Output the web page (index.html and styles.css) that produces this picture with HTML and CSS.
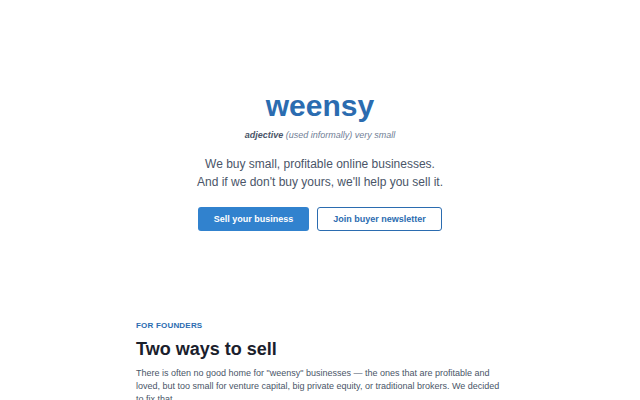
FILE: index.html
```html
<!DOCTYPE html>
<html>
<head>
<meta charset="utf-8">
<link rel="stylesheet" href="styles.css">
</head>
<body>
<main class="page">
  <section class="hero">
    <h1 class="logo">weensy</h1>
    <p class="definition"><b>adjective</b> (used informally) very small</p>
    <p class="lead">We buy small, profitable online businesses.<br>And if we don't buy yours, we'll help you sell it.</p>
    <div class="actions">
      <a class="btn btn-primary" href="#">Sell your business</a>
      <a class="btn btn-outline" href="#">Join buyer newsletter</a>
    </div>
  </section>
  <section class="founders">
    <p class="eyebrow">FOR FOUNDERS</p>
    <h2 class="heading">Two ways to sell</h2>
    <p class="body">There is often no good home for "weensy" businesses — the ones that are profitable and loved, but too small for venture capital, big private equity, or traditional brokers. We decided to fix that.</p>
  </section>
</main>
</body>
</html>
```
FILE: styles.css
```css
html, body {
  margin: 0;
  padding: 0;
  background: #ffffff;
}
body {
  font-family: "Liberation Sans", Arial, sans-serif;
  color: #2d3748;
}
.page {
  display: flex;
  flex-direction: column;
  align-items: center;
}
.hero {
  display: flex;
  flex-direction: column;
  align-items: center;
  padding-top: 88px;
}
.logo {
  margin: 0;
  font-size: 30px;
  line-height: 36px;
  font-weight: 700;
  color: #2b6cb0;
}
.definition {
  margin: 4px 0 0;
  font-size: 9px;
  line-height: 14px;
  font-style: italic;
  color: #718096;
}
.definition b {
  color: #4a5568;
}
.lead {
  margin: 13px 0 0;
  font-size: 12px;
  line-height: 18px;
  text-align: center;
  color: #4a5568;
}
.actions {
  display: flex;
  gap: 8px;
  margin-top: 16px;
}
.btn {
  display: flex;
  align-items: center;
  justify-content: center;
  height: 24px;
  box-sizing: border-box;
  border-radius: 3px;
  font-size: 9px;
  font-weight: 700;
  text-decoration: none;
}
.btn-primary {
  width: 111px;
  background: #3182ce;
  color: #ffffff;
}
.btn-outline {
  width: 125px;
  border: 1px solid #2b6cb0;
  color: #2b6cb0;
  background: #ffffff;
}
.founders {
  width: 368px;
  margin-top: 89px;
}
.eyebrow {
  margin: 0;
  font-size: 8px;
  line-height: 12px;
  font-weight: 700;
  color: #2b6cb0;
  letter-spacing: 0.2px;
}
.heading {
  margin: 5px 0 0;
  font-size: 18px;
  line-height: 24px;
  font-weight: 700;
  color: #1a202c;
}
.body {
  margin: 6px 0 0;
  font-size: 9px;
  line-height: 13px;
  color: #4a5568;
}
```
